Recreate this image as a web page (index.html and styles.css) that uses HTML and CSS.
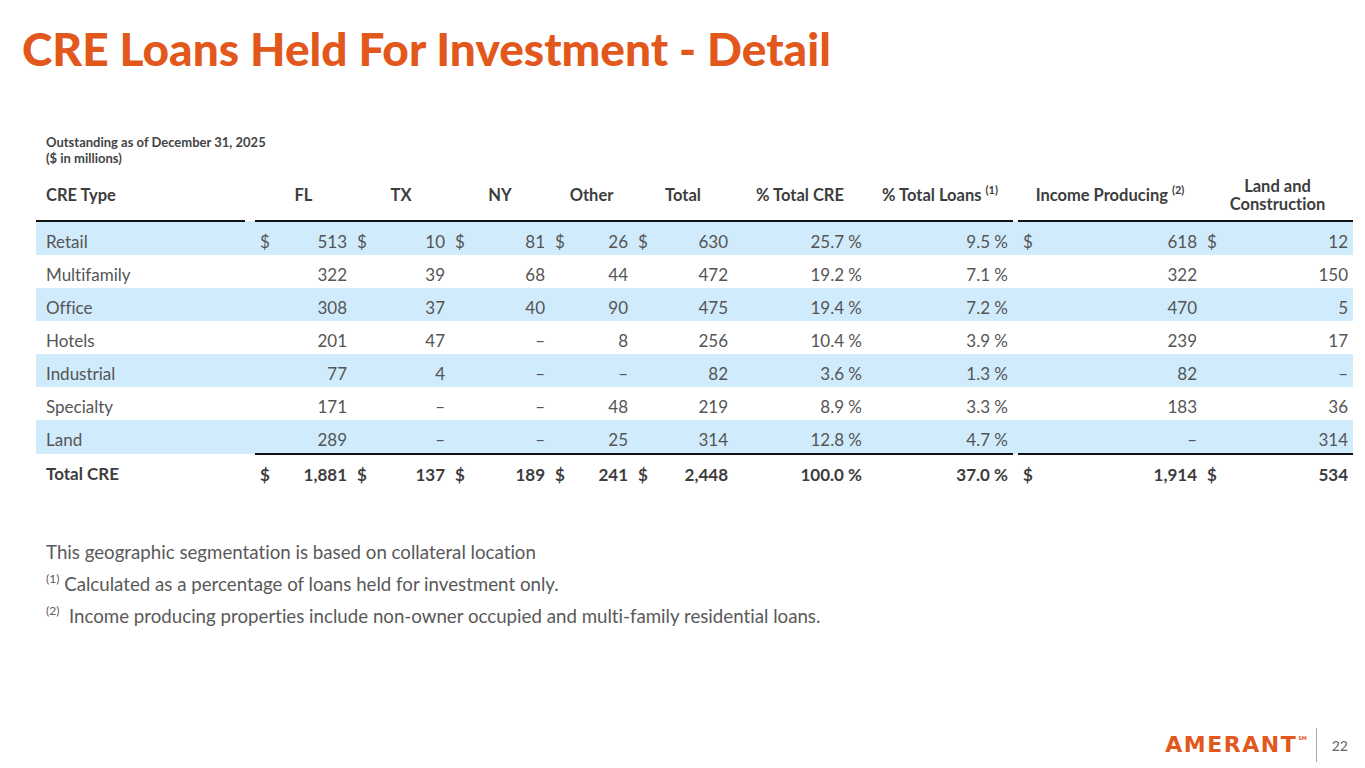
FILE: index.html
```html
<!DOCTYPE html>
<html lang="en">
<head>
<meta charset="utf-8">
<title>CRE Loans Held For Investment - Detail</title>
<link rel="stylesheet" href="styles.css">
</head>
<body>
<div class="slide">
  <h1 class="title">CRE Loans Held For Investment - Detail</h1>
  <div class="content">
    <div class="subtitle">
      <div>Outstanding as of December 31, 2025</div>
      <div>($ in millions)</div>
    </div>
    <table class="cre">
      <colgroup>
        <col class="c-label"><col class="c-sp1">
        <col class="c-fl"><col class="c-tx"><col class="c-ny"><col class="c-other"><col class="c-total">
        <col class="c-pcre"><col class="c-ploans"><col class="c-sp2">
        <col class="c-inc"><col class="c-land">
      </colgroup>
      <thead>
        <tr>
          <th class="lbl">CRE Type</th><th class="sp"></th>
          <th>FL</th><th>TX</th><th>NY</th><th>Other</th><th>Total</th>
          <th>% Total CRE</th><th>% Total Loans <sup>(1)</sup></th><th class="sp"></th>
          <th>Income Producing <sup>(2)</sup></th><th>Land and<br>Construction</th>
        </tr>
      </thead>
      <tbody>
        <tr class="band">
          <td class="lbl">Retail</td><td></td>
          <td><div class="v"><span>$</span><span>513</span></div></td>
          <td><div class="v"><span>$</span><span>10</span></div></td>
          <td><div class="v"><span>$</span><span>81</span></div></td>
          <td><div class="v"><span>$</span><span>26</span></div></td>
          <td><div class="v"><span>$</span><span>630</span></div></td>
          <td class="num">25.7 %</td><td class="num">9.5 %</td><td></td>
          <td><div class="v"><span>$</span><span>618</span></div></td>
          <td><div class="v"><span>$</span><span>12</span></div></td>
        </tr>
        <tr>
          <td class="lbl">Multifamily</td><td></td>
          <td class="num">322</td><td class="num">39</td><td class="num">68</td><td class="num">44</td><td class="num">472</td>
          <td class="num">19.2 %</td><td class="num">7.1 %</td><td></td>
          <td class="num">322</td><td class="num">150</td>
        </tr>
        <tr class="band">
          <td class="lbl">Office</td><td></td>
          <td class="num">308</td><td class="num">37</td><td class="num">40</td><td class="num">90</td><td class="num">475</td>
          <td class="num">19.4 %</td><td class="num">7.2 %</td><td></td>
          <td class="num">470</td><td class="num">5</td>
        </tr>
        <tr>
          <td class="lbl">Hotels</td><td></td>
          <td class="num">201</td><td class="num">47</td><td class="num">–</td><td class="num">8</td><td class="num">256</td>
          <td class="num">10.4 %</td><td class="num">3.9 %</td><td></td>
          <td class="num">239</td><td class="num">17</td>
        </tr>
        <tr class="band">
          <td class="lbl">Industrial</td><td></td>
          <td class="num">77</td><td class="num">4</td><td class="num">–</td><td class="num">–</td><td class="num">82</td>
          <td class="num">3.6 %</td><td class="num">1.3 %</td><td></td>
          <td class="num">82</td><td class="num">–</td>
        </tr>
        <tr>
          <td class="lbl">Specialty</td><td></td>
          <td class="num">171</td><td class="num">–</td><td class="num">–</td><td class="num">48</td><td class="num">219</td>
          <td class="num">8.9 %</td><td class="num">3.3 %</td><td></td>
          <td class="num">183</td><td class="num">36</td>
        </tr>
        <tr class="band">
          <td class="lbl">Land</td><td></td>
          <td class="num">289</td><td class="num">–</td><td class="num">–</td><td class="num">25</td><td class="num">314</td>
          <td class="num">12.8 %</td><td class="num">4.7 %</td><td></td>
          <td class="num">–</td><td class="num">314</td>
        </tr>
        <tr class="total">
          <td class="lbl">Total CRE</td><td class="sp"></td>
          <td class="ln"><div class="v"><span>$</span><span>1,881</span></div></td>
          <td class="ln"><div class="v"><span>$</span><span>137</span></div></td>
          <td class="ln"><div class="v"><span>$</span><span>189</span></div></td>
          <td class="ln"><div class="v"><span>$</span><span>241</span></div></td>
          <td class="ln"><div class="v"><span>$</span><span>2,448</span></div></td>
          <td class="num ln">100.0 %</td><td class="num ln">37.0 %</td><td class="sp"></td>
          <td class="ln"><div class="v"><span>$</span><span>1,914</span></div></td>
          <td class="ln"><div class="v"><span>$</span><span>534</span></div></td>
        </tr>
      </tbody>
    </table>
    <div class="notes">
      <p>This geographic segmentation is based on collateral location</p>
      <p><sup>(1)</sup> Calculated as a percentage of loans held for investment only.</p>
      <p><sup>(2)</sup>&nbsp; Income producing properties include non-owner occupied and multi-family residential loans.</p>
    </div>
  </div>
  <footer class="footer">
    <div class="logo">AMERANT<span class="sm">SM</span></div>
    <div class="divider"></div>
    <div class="page">22</div>
  </footer>
</div>
</body>
</html>
```

FILE: styles.css
```css
* { box-sizing: border-box; }
html, body { margin: 0; padding: 0; background: #fff; }
body {
  font-family: Lato, "Open Sans", sans-serif;
  color: #555;
  font-variant-ligatures: none;
}

.slide {
  width: 1365px;
  height: 768px;
  display: flex;
  flex-direction: column;
  overflow: hidden;
}

.title {
  margin: 21px 0 0 22px;
  font-size: 46px;
  line-height: 56px;
  font-weight: 900;
  color: #e2581c;
  letter-spacing: 0;
}

.content { padding-left: 36px; }

.subtitle {
  margin-top: 57px;
  padding-left: 10px;
  font-size: 13px;
  line-height: 16px;
  font-weight: 700;
  color: #444;
}

.cre {
  margin-top: 8px;
  border-collapse: collapse;
  table-layout: fixed;
  width: 1317px;
  font-size: 17px;
}
.c-label { width: 209px; }
.c-sp1 { width: 10px; }
.c-fl { width: 97px; }
.c-tx { width: 98px; }
.c-ny { width: 100px; }
.c-other { width: 83px; }
.c-total { width: 100px; }
.c-pcre { width: 134px; }
.c-ploans { width: 146px; }
.c-sp2 { width: 5px; }
.c-inc { width: 184px; }
.c-land { width: 151px; }

.cre th {
  padding: 3px 5px 7px;
  line-height: 18px;
  font-size: 16.5px;
  font-weight: 700;
  color: #3d3d3d;
  text-align: center;
  vertical-align: middle;
  border-bottom: 2px solid #111;
  white-space: nowrap;
}
.cre th.lbl { text-align: left; padding-left: 10px; }
.cre th.sp { border-bottom: 0; }
.cre sup { font-size: 11px; line-height: 0; vertical-align: 7px; font-weight: 400; }
.cre th sup { font-weight: 700; }

.cre td {
  height: 33px;
  padding: 6px 5px 0;
  line-height: 27px;
  vertical-align: top;
  color: #555;
  white-space: nowrap;
}
.cre td.lbl { padding-left: 10px; }
.cre td.num { text-align: right; }
.cre tr.band td { background: #d0ebfb; }

.v { display: flex; justify-content: space-between; }

.cre tr.total td { font-weight: 700; color: #3d3d3d; padding-top: 7px; line-height: 26px; }
.cre tr.total td.ln { border-top: 2px solid #111; }

.notes { margin-top: 48px; padding-left: 10px; font-size: 18.7px; color: #595959; }
.notes p { margin: 0; line-height: 32px; }
.notes sup { font-size: 12px; line-height: 0; vertical-align: 8px; }

.footer {
  margin-top: auto;
  margin-bottom: 6px;
  align-self: flex-end;
  display: flex;
  align-items: center;
  padding-right: 17px;
}
.logo {
  font-family: "DejaVu Sans", sans-serif;
  font-weight: 700;
  font-size: 22px;
  letter-spacing: 1.5px;
  color: #e2581c;
  line-height: 24px;
  display: flex;
  align-items: flex-start;
}
.logo .sm { font-size: 5px; line-height: 6px; letter-spacing: 0; margin-left: 1px; margin-top: 2px; }
.divider { width: 1px; height: 34px; background: #aaa; margin: 0 15px 0 9px; }
.page { font-size: 14px; color: #666; font-family: Lato, sans-serif; }
```
